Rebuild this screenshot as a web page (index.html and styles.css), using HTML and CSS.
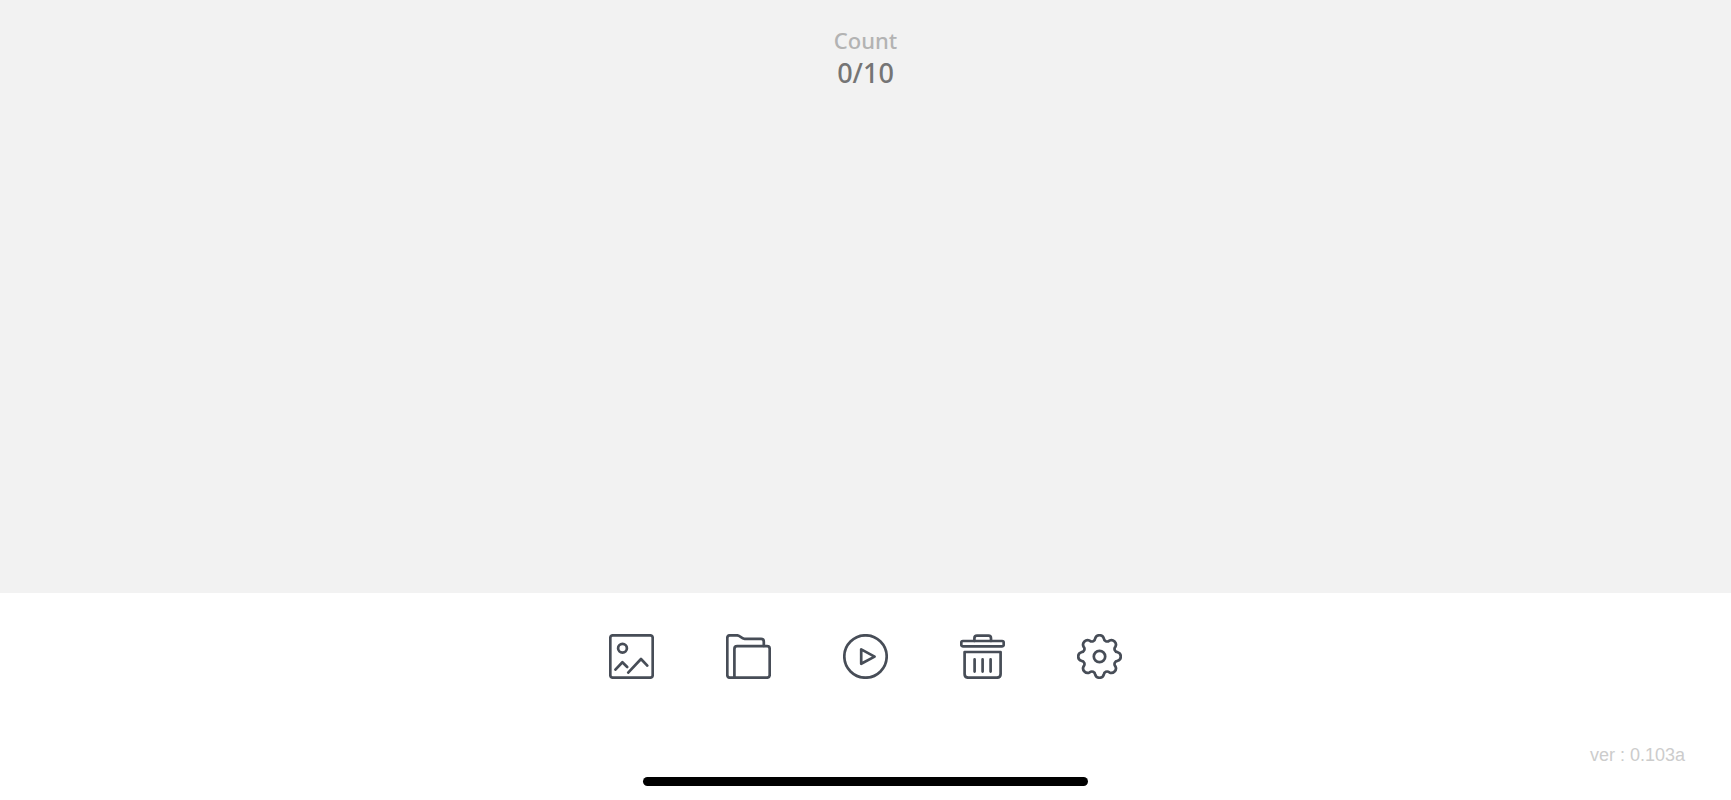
FILE: index.html
```
<!DOCTYPE html>
<html lang="en">
<head>
  <meta charset="UTF-8">
  <meta name="viewport" content="width=device-width, initial-scale=1">
  <title>Count</title>
  <link rel="stylesheet" href="styles.css">
</head>
<body>

  <main class="stage">
    <div class="count-label">Count</div>
    <div class="count-value">0/10</div>
  </main>

  <footer class="bottom">
    <nav class="toolbar">
      <button type="button" class="tool" aria-label="Image">
        <svg viewBox="0 0 45 45">
          <rect x="1.3" y="1.3" width="42.4" height="42.4" rx="2.5"/>
          <circle cx="13.5" cy="14.3" r="4.4"/>
          <path d="M6.4 35.6 13.4 28.3 18.2 33M19.2 38.6 32 25 38.3 31.6"/>
        </svg>
      </button>
      <button type="button" class="tool" aria-label="Folder">
        <svg viewBox="0 0 45 45">
          <path d="M8.4 43.7H4Q1.3 43.7 1.3 41V4Q1.3 1.3 4 1.3H11C14.5 1.3 15 4.9 18.6 4.9H35Q37.8 4.9 37.8 7.7V12"/>
          <path d="M8.4 43.7V15Q8.4 12.2 11.2 12.2H41Q43.7 12.2 43.7 15V41Q43.7 43.7 41 43.7Z"/>
        </svg>
      </button>
      <button type="button" class="tool" aria-label="Play">
        <svg viewBox="0 0 45 45">
          <circle cx="22.5" cy="22.5" r="21.2"/>
          <path d="M18.2 15.4V29.8L31.6 22.6Z"/>
        </svg>
      </button>
      <button type="button" class="tool" aria-label="Delete">
        <svg viewBox="0 0 45 45">
          <path d="M14.4 7V4.2Q14.4 1.6 17 1.6H28.5Q31 1.6 31 4.2V7"/>
          <rect x="1.3" y="7" width="42.4" height="5.4" rx="1.5"/>
          <path d="M4.6 18H40.6V40Q40.6 43.7 37 43.7H8.3Q4.6 43.7 4.6 40Z"/>
          <path d="M14.6 25.4V37.6M22.6 25.4V37.6M30.6 25.4V37.6"/>
        </svg>
      </button>
      <button type="button" class="tool" aria-label="Settings">
        <svg viewBox="-22.5 -22.5 45 45">
          <path d="M-4.3 -18.1A4.5 4.5 0 0 1 4.3 -18.1A3.3 3.3 0 0 0 9.75 -15.85A4.5 4.5 0 0 1 15.85 -9.75A3.3 3.3 0 0 0 18.1 -4.3A4.5 4.5 0 0 1 18.1 4.3A3.3 3.3 0 0 0 15.85 9.75A4.5 4.5 0 0 1 9.75 15.85A3.3 3.3 0 0 0 4.3 18.1A4.5 4.5 0 0 1 -4.3 18.1A3.3 3.3 0 0 0 -9.75 15.85A4.5 4.5 0 0 1 -15.85 9.75A3.3 3.3 0 0 0 -18.1 4.3A4.5 4.5 0 0 1 -18.1 -4.3A3.3 3.3 0 0 0 -15.85 -9.75A4.5 4.5 0 0 1 -9.75 -15.85A3.3 3.3 0 0 0 -4.3 -18.1Z"/>
          <circle cx="0" cy="0" r="5.7"/>
        </svg>
      </button>
    </nav>
    <div class="version">ver : 0.103a</div>
    <div class="home-bar"></div>
  </footer>

</body>
</html>
```

FILE: styles.css
```
body {
  margin: 0;
  min-height: 100vh;
  display: flex;
  flex-direction: column;
  background: #fff;
  font-family: "Noto Sans", sans-serif;
}

.stage {
  flex: 1;
  padding-top: 26px;
  background: #f2f2f2;
  text-align: center;
  font-weight: 500;
}

.count-label {
  font-size: 22px;
  line-height: 28px;
  color: #b3b3b3;
}

.count-value {
  font-size: 27px;
  line-height: 38px;
  color: #757575;
}

.bottom {
  padding: 41px 0 14px;
}

.toolbar {
  display: flex;
  justify-content: center;
  gap: 72px;
}

.tool {
  width: 45px;
  height: 45px;
  padding: 0;
  border: 0;
  background: none;
  cursor: pointer;
}

.tool svg {
  display: block;
  width: 100%;
  height: 100%;
  fill: none;
  stroke: #474d57;
  stroke-width: 2.7;
  stroke-linecap: round;
  stroke-linejoin: round;
}

.version {
  margin-top: 66px;
  padding-right: 46px;
  text-align: right;
  font-family: "Liberation Sans", Arial, sans-serif;
  font-size: 18px;
  line-height: 20px;
  color: #ccc;
}

.home-bar {
  width: 445px;
  max-width: 80%;
  height: 9px;
  margin: 12px auto 0;
  border-radius: 5px;
  background: #000;
}
```
